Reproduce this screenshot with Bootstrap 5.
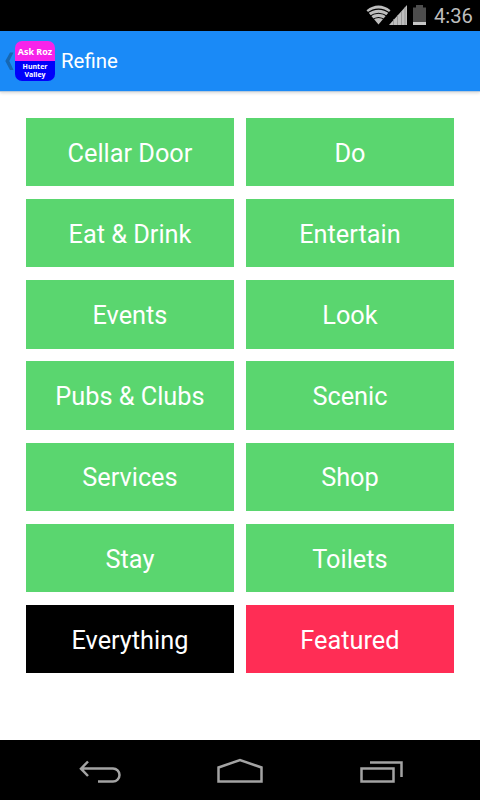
<!DOCTYPE html>
<html lang="en">
<head>
<meta charset="utf-8">
<meta name="viewport" content="width=device-width, initial-scale=1">
<title>Refine</title>
<link href="https://cdn.jsdelivr.net/npm/bootstrap@5.3.0/dist/css/bootstrap.min.css" rel="stylesheet">
<style>
body { font-family: Roboto, sans-serif; width: 480px; height: 800px; overflow: hidden; }
.status-bar { height: 31px; color: #bebebe; font-size: 20.2px; line-height: 31px; padding-right: 7px; }
.status-bar .clock { width: 39px; white-space: nowrap; padding-top: 1px; }
.app-bar { height: 60px; background: #1a8af7; box-shadow: 0 1px 0 #b9cbdc, 0 2px 3px rgba(0,0,0,.16); padding-left: 5px; }
.app-logo { width: 40px; height: 40px; border-radius: 7px; background: linear-gradient(#f723ea 50%, #0000fb 50%); font-family: "Open Sans", sans-serif; font-weight: 700; }
.logo-top { height: 20px; line-height: 21px; font-size: 9px; }
.logo-bottom { height: 20px; font-size: 7px; padding-top: 2px; }
.logo-bottom span { display: block; line-height: 8px; height: 8px; }
.screen-title { font-size: 20.4px; line-height: 30px; margin-left: 6px; }
.choices { display: grid; grid-template-columns: 207.5px 207.5px; grid-auto-rows: 68.5px; gap: 12.7px 12.5px; padding: 26.8px 26.2px 0; }
.choice { --bs-btn-bg: #5ad66f; --bs-btn-color: #fff; --bs-btn-hover-bg: #4ccb62; --bs-btn-hover-color: #fff; font-size: 25.3px; line-height: 30px; padding: 3.2px 0 0; border: 0; border-radius: 0; }
.choice-all { --bs-btn-bg: #000; --bs-btn-hover-bg: #222; }
.choice-featured { --bs-btn-bg: #ff2d55; --bs-btn-hover-bg: #e9244a; }
.nav-keys { height: 60px; }
</style>
</head>
<body class="d-flex flex-column bg-white m-0">
<header class="status-bar bg-black d-flex justify-content-end align-items-start flex-shrink-0">
  <svg width="67" height="31" viewBox="363 0 67 31" aria-hidden="true">
    <path d="M378.500 24.500 366.500 10.200Q378.500 1 390.500 10.200Z" fill="#bebebe"/>
    <g fill="none" stroke="#000" stroke-width="1.200">
      <path d="M367 13.300Q378.500 4.800 390 13.300"/>
      <path d="M369 16.700Q378.500 9.800 388 16.700"/>
      <path d="M372 20Q378.500 15 385 20"/>
    </g>
    <path d="M389 25 407 5V25Z" fill="#bebebe"/>
    <path d="M393.500 19V25M397.500 15V25M401.500 11V25M405 7V25" stroke="#888" stroke-width=".7"/>
    <path d="M413 7.500H416V5H423V7.500H426V22H413Z" fill="#4d4d4d"/>
    <path d="M413 22H426V25H413Z" fill="#c8c8c8"/>
  </svg>
  <span class="clock ms-1">4:36</span>
</header>
<nav class="app-bar d-flex align-items-center flex-shrink-0 text-white">
  <svg width="10" height="20" viewBox="0 0 10 20" aria-hidden="true"><path d="M5 1.500H8.500L4.300 10 8.500 19H5L.3 10Z" fill="#1667b2"/></svg>
  <div class="app-logo text-center overflow-hidden">
    <div class="logo-top">Ask Roz</div>
    <div class="logo-bottom"><span>Hunter</span><span>Valley</span></div>
  </div>
  <span class="screen-title">Refine</span>
</nav>
<main class="choices flex-grow-1">
  <button type="button" class="btn choice">Cellar Door</button>
  <button type="button" class="btn choice">Do</button>
  <button type="button" class="btn choice">Eat &amp; Drink</button>
  <button type="button" class="btn choice">Entertain</button>
  <button type="button" class="btn choice">Events</button>
  <button type="button" class="btn choice">Look</button>
  <button type="button" class="btn choice">Pubs &amp; Clubs</button>
  <button type="button" class="btn choice">Scenic</button>
  <button type="button" class="btn choice">Services</button>
  <button type="button" class="btn choice">Shop</button>
  <button type="button" class="btn choice">Stay</button>
  <button type="button" class="btn choice">Toilets</button>
  <button type="button" class="btn choice choice-all">Everything</button>
  <button type="button" class="btn choice choice-featured">Featured</button>
</main>
<footer class="nav-keys bg-black d-flex justify-content-center flex-shrink-0">
  <svg width="140" height="60" viewBox="30 0 140 60" fill="none" stroke="#a3a3a3" stroke-width="2.500" aria-label="Back"><path d="M81 28.500H113A6.500 6.500 0 0 1 113 41.500H98M88 21.500 81 28.700 88 36"/></svg>
  <svg width="140" height="60" viewBox="170 0 140 60" fill="none" stroke="#a3a3a3" stroke-width="2.500" aria-label="Home"><path d="M218.500 27.500 240 20 261.500 27.500V41.500H218.500Z"/></svg>
  <svg width="140" height="60" viewBox="310 0 140 60" fill="none" stroke="#a3a3a3" stroke-width="2.500" aria-label="Recent apps"><path d="M361.500 28.500H393.500V41.500H361.500ZM370 22.500H401.500V37"/></svg>
</footer>
<script src="https://cdn.jsdelivr.net/npm/bootstrap@5.3.0/dist/js/bootstrap.bundle.min.js"></script>
</body>
</html>
